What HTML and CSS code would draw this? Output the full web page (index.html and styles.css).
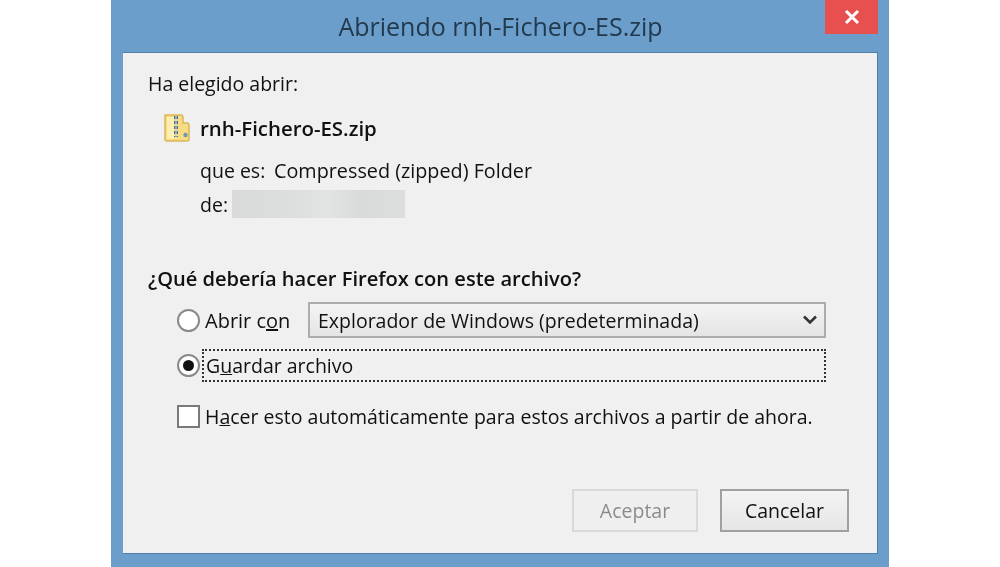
FILE: index.html
```html
<!DOCTYPE html>
<html>
<head>
    <title>Abriendo rnh-Fichero-ES.zip</title>
    <link rel="stylesheet" href="styles.css">
</head>
<body>
    <div class="window">
        <header class="titlebar">Abriendo rnh-Fichero-ES.zip</header>
        <div class="close-btn">
            <svg width="16" height="14" viewBox="0 0 16 14">
                <path d="M2 1 L14 13 M14 1 L2 13" stroke="#fff" stroke-width="3" fill="none"/>
            </svg>
        </div>

        <main class="panel">
            <p class="intro">Ha elegido abrir:</p>

            <div class="file-row">
                <svg class="zip-icon" width="26" height="28" viewBox="0 0 26 28">
                    <path d="M1 1 H17 Q19 1 19 4 V9 H23 Q25 9 25 12 V25 Q25 27 23 27 H3 Q1 27 1 25 Z" fill="#f6dc85" stroke="#dcb558" stroke-width="1.5"/>
                    <rect x="3" y="3" width="7" height="22" fill="#fcefb4"/>
                    <path d="M12 2 V23" stroke="#4f6f90" stroke-width="4" stroke-dasharray="3 2"/>
                    <path d="M12 2 V23" stroke="#c9d4c8" stroke-width="1.2"/>
                    <circle cx="21.5" cy="21" r="2.2" fill="#6f9aa8"/>
                </svg>
                <span class="file-name">rnh-Fichero-ES.zip</span>
            </div>

            <div class="meta-row meta-type">
                <span class="meta-label">que es:</span>
                <span class="meta-value">Compressed (zipped) Folder</span>
            </div>
            <div class="meta-row meta-source">
                <span>de:</span>
                <span class="blurred"></span>
            </div>

            <h2 class="question">¿Qué debería hacer Firefox con este archivo?</h2>

            <div class="option option-open">
                <span class="radio"></span>
                <span class="open-label">Abrir c<u>o</u>n</span>
                <div class="select">
                    <span>Explorador de Windows (predeterminada)</span>
                    <svg width="16" height="10" viewBox="0 0 16 10">
                        <path d="M2 1.5 L8 7.5 L14 1.5" stroke="#333" stroke-width="2.6" fill="none"/>
                    </svg>
                </div>
            </div>

            <div class="option option-save">
                <span class="radio radio-on"></span>
                <span class="focus-box">G<u>u</u>ardar archivo</span>
            </div>

            <div class="option option-auto">
                <span class="checkbox"></span>
                <span>H<u>a</u>cer esto automáticamente para estos archivos a partir de ahora.</span>
            </div>

            <footer class="actions">
                <button class="btn btn-disabled">Aceptar</button>
                <button class="btn btn-cancel">Cancelar</button>
            </footer>
        </main>
    </div>
</body>
</html>
```

FILE: styles.css
```css
body {
    margin: 0;
    background: #fff;
    font-family: "Open Sans", "Noto Sans", sans-serif;
    font-size: 19.5px;
    color: #111;
}
.window {
    position: relative;
    box-sizing: border-box;
    width: 778px;
    height: 567px;
    margin-left: 111px;
    padding: 0 11px 13px 12px;
    background: #6b9ecb;
    display: flex;
    flex-direction: column;
    filter: blur(0.45px);
}
.titlebar {
    height: 52px;
    flex-shrink: 0;
    box-sizing: border-box;
    padding-top: 8px;
    line-height: 36px;
    text-align: center;
    font-size: 25px;
    color: #23394d;
}
.close-btn {
    position: absolute;
    top: 0;
    right: 11px;
    width: 53px;
    height: 34px;
    background: #e8504f;
    display: flex;
    align-items: center;
    justify-content: center;
}
.panel {
    flex: 1;
    box-sizing: border-box;
    padding: 19px 28px 0 25px;
    background: #f0f0f0;
    border-top: 1px solid #4f7ea8;
    border-right: 1px solid #4f7ea8;
    border-bottom: 1px solid #4f7ea8;
    display: flex;
    flex-direction: column;
}
.intro {
    margin: 0;
    line-height: 24px;
}
.file-row {
    display: flex;
    align-items: center;
    margin: 18px 0 0 16px;
    height: 28px;
}
.zip-icon {
    flex-shrink: 0;
}
.file-name {
    margin-left: 10px;
    font-weight: 600;
    font-size: 20.4px;
}
.meta-row {
    display: flex;
    align-items: center;
    margin-left: 52px;
}
.meta-type {
    margin-top: 14px;
    height: 28px;
}
.meta-label {
    width: 74px;
}
.meta-value {
    font-size: 19.8px;
}
.meta-source {
    margin-top: 5px;
    height: 30px;
}
.blurred {
    width: 173px;
    height: 28px;
    margin-left: 4px;
    background: linear-gradient(90deg, #d9dada, #dcdddd 35%, #e2e3e3 55%, #d9dada 75%, #dcdddd);
}
.question {
    margin: 48px 0 0;
    font-size: 20.1px;
    font-weight: 600;
    line-height: 24px;
}
.option {
    display: flex;
    align-items: center;
    margin: 0 23px 0 29px;
}
.option-open {
    margin-top: 11px;
    height: 36px;
}
.radio {
    flex-shrink: 0;
    box-sizing: border-box;
    width: 23px;
    height: 23px;
    border: 2px solid #8a8a8a;
    border-radius: 50%;
    background: #fff;
    display: flex;
    align-items: center;
    justify-content: center;
}
.radio-on::after {
    content: "";
    width: 11px;
    height: 11px;
    border-radius: 50%;
    background: #111;
}
.open-label {
    margin-left: 5px;
    width: 103px;
    flex-shrink: 0;
    font-size: 20px;
}
.select {
    box-sizing: border-box;
    flex: 1;
    height: 36px;
    padding: 0 6px 0 8px;
    border: 2px solid #adadad;
    background: linear-gradient(#f4f4f4, #e4e4e4);
    display: flex;
    align-items: center;
    justify-content: space-between;
}
.option-save {
    margin-top: 11px;
    height: 33px;
}
.focus-box {
    box-sizing: border-box;
    flex: 1;
    height: 33px;
    margin-left: 2px;
    padding-left: 2px;
    line-height: 30px;
    border: 2px dotted #333;
}
.option-auto {
    margin-top: 23px;
    height: 23px;
    margin-right: 0;
}
.checkbox {
    flex-shrink: 0;
    box-sizing: border-box;
    width: 23px;
    height: 23px;
    margin-right: 5px;
    border: 2px solid #7a7a7a;
    background: #fff;
}
.actions {
    display: flex;
    justify-content: flex-end;
    gap: 22px;
    margin-top: 61px;
}
.btn {
    box-sizing: border-box;
    width: 129px;
    height: 43px;
    border: 2px solid #a0a0a0;
    background: linear-gradient(#f3f3f3, #e6e6e6);
    font-family: inherit;
    font-size: 19.5px;
    color: #111;
}
.btn-disabled {
    width: 126px;
    border-color: #d9d9d9;
    background: #efefef;
    color: #8b8b8b;
}
```
